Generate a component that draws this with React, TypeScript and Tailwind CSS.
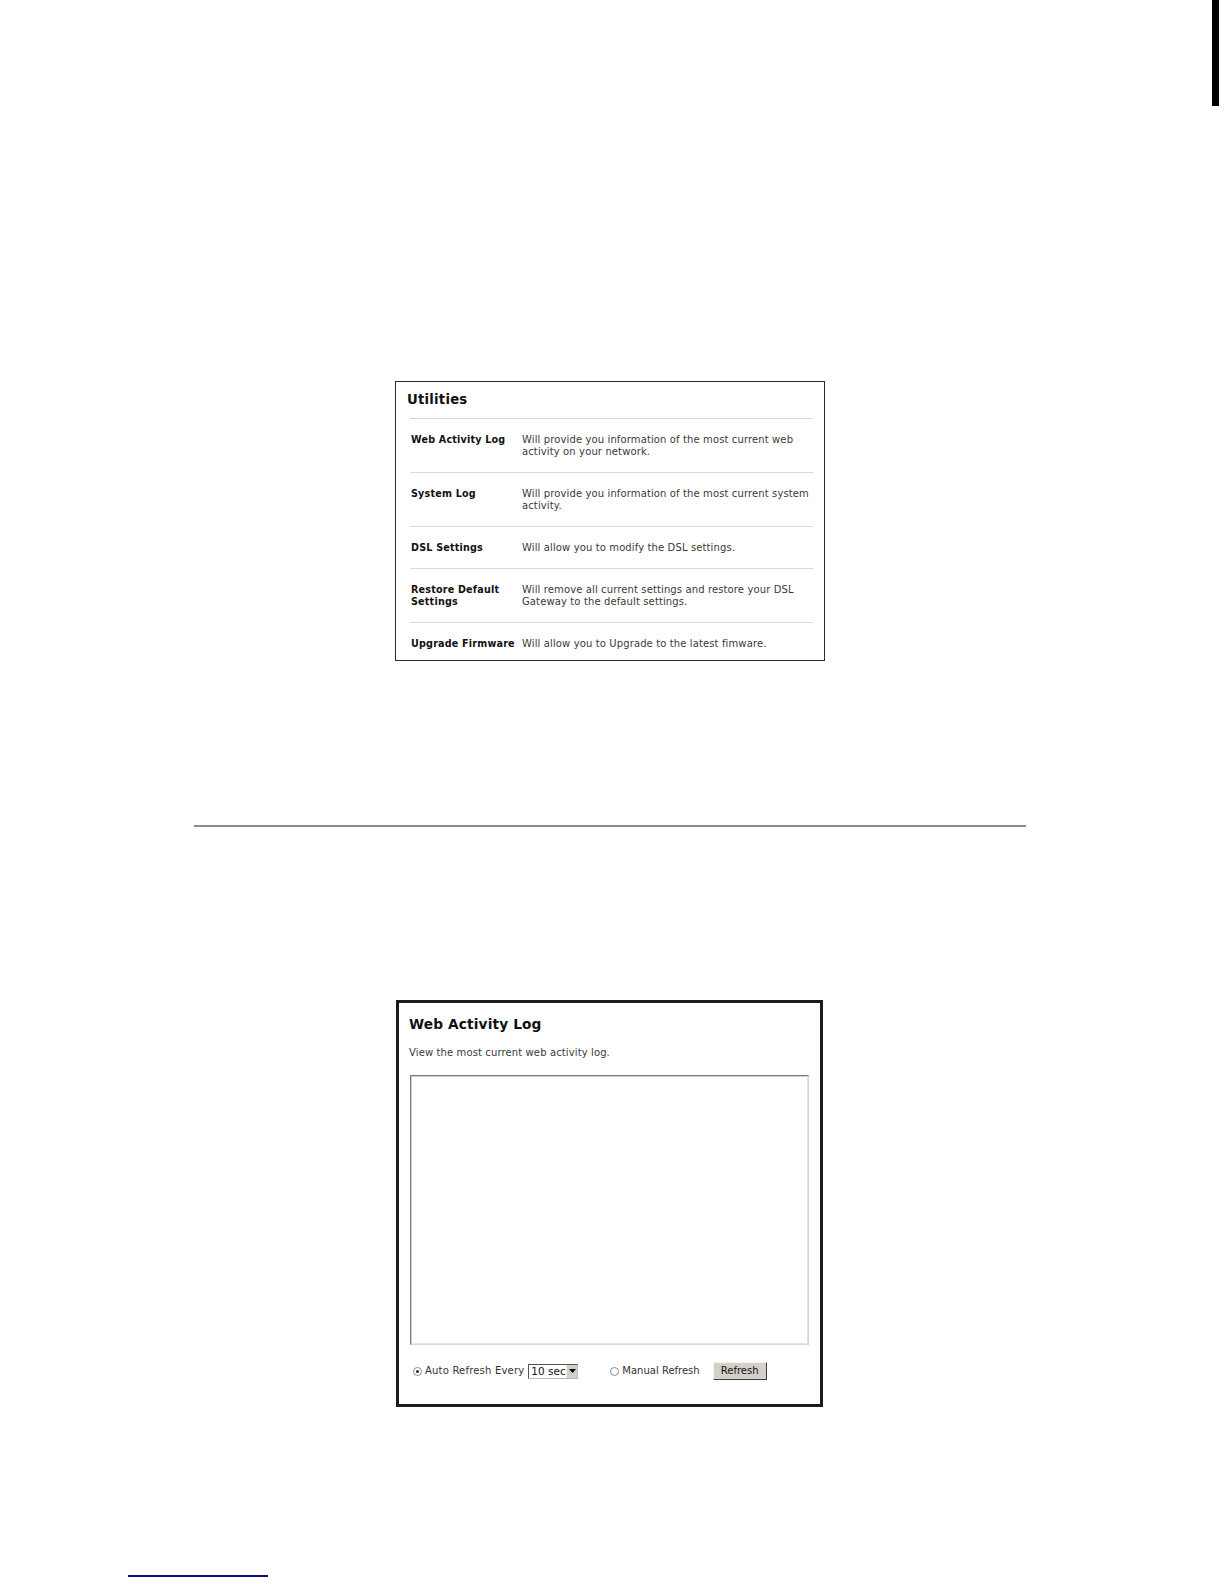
import React from "react";

const rows: { label: string[]; desc: string[] }[] = [
  {
    label: ["Web Activity Log"],
    desc: ["Will provide you information of the most current web", "activity on your network."],
  },
  {
    label: ["System Log"],
    desc: ["Will provide you information of the most current system", "activity."],
  },
  { label: ["DSL Settings"], desc: ["Will allow you to modify the DSL settings."] },
  {
    label: ["Restore Default", "Settings"],
    desc: ["Will remove all current settings and restore your DSL", "Gateway to the default settings."],
  },
  { label: ["Upgrade Firmware"], desc: ["Will allow you to Upgrade to the latest fimware."] },
];

function Radio({ checked }: { checked?: boolean }) {
  return (
    <span className="flex items-center justify-center w-[9px] h-[9px] rounded-full border border-[#8c8c8c] bg-white shrink-0">
      {checked ? <span className="w-[3px] h-[3px] rounded-full bg-[#222]" /> : null}
    </span>
  );
}

export default function App() {
  return (
    <div className="w-[1224px] h-[1584px] bg-white flex flex-col font-['DejaVu_Sans',sans-serif] text-black overflow-hidden">
      {/* margin tab */}
      <div className="ml-[1212px] w-[7px] h-[106px] bg-black shrink-0" />

      {/* Utilities panel */}
      <div className="mt-[275px] ml-[395px] w-[430px] h-[280px] border border-[#2a2a2a] box-border flex flex-col shrink-0">
        <div className="pl-[11px] pt-[10px] text-[13.3px] leading-[16px] font-bold text-[#111] tracking-[0.2px]">Utilities</div>
        <div className="mt-[10px] ml-[14px] mr-[11px] flex flex-col">
          {rows.map((r, i) => (
            <div
              key={i}
              className="flex border-t border-[#d9d9d9] pt-[15px] pb-[14px] text-[10px] leading-[12px]"
            >
              <div className="w-[112px] shrink-0 pl-px font-bold text-[9.6px] text-[#111] tracking-[0.2px]">
                {r.label.map((l, j) => (
                  <div key={j} className="whitespace-nowrap">{l}</div>
                ))}
              </div>
              <div className="text-[#3a3a3a] tracking-[0.12px]">
                {r.desc.map((d, j) => (
                  <div key={j} className="whitespace-nowrap">{d}</div>
                ))}
              </div>
            </div>
          ))}
        </div>
      </div>

      {/* horizontal rule */}
      <div className="mt-[164px] ml-[194px] w-[832px] h-[2px] bg-[#8a8a8a] shrink-0" />

      {/* Web Activity Log panel */}
      <div className="mt-[173px] ml-[396px] w-[427px] h-[407px] border-[3px] border-[#1c1c1c] box-border flex flex-col shrink-0">
        <div className="pl-[10px] pt-[13px] text-[13.7px] leading-[17px] font-bold text-[#111] tracking-[0.15px]">Web Activity Log</div>
        <div className="pl-[10px] mt-[14px] text-[10px] leading-[12px] text-[#3a3a3a] tracking-[0.12px]">
          View the most current web activity log.
        </div>
        <div className="ml-[11px] mt-[16px] w-[399px] h-[270px] border border-t-[#7a7a7a] border-l-[#7a7a7a] border-r-[#d6d6d6] border-b-[#d6d6d6] box-border">
          <div className="w-full h-full border border-t-[#cfcfcf] border-l-[#cfcfcf] border-r-[#e4e4e4] border-b-[#e4e4e4] box-border bg-white" />
        </div>
        <div className="ml-[14px] mt-[17px] h-[18px] flex items-center text-[10px] leading-[12px] text-[#333]">
          <Radio checked />
          <span className="ml-[3px] whitespace-nowrap tracking-[0.2px]">Auto Refresh Every</span>
          <div className="ml-[4px] w-[50px] h-[15px] flex border border-t-[#555] border-l-[#555] border-r-[#bbb] border-b-[#bbb] box-border bg-white">
            <span className="flex-1 pl-[2px] text-[10.5px] leading-[13px] text-[#111] whitespace-nowrap">10 sec</span>
            <span className="w-[11px] h-full flex items-center justify-center bg-[#d4d0c8] border-l border-[#eee]">
              <svg width="7" height="4" viewBox="0 0 7 4">
                <path d="M0 0 H7 L3.5 4 Z" fill="#000" />
              </svg>
            </span>
          </div>
          <span className="ml-[32px]">
            <Radio />
          </span>
          <span className="ml-[3px] whitespace-nowrap">Manual Refresh</span>
          <div className="ml-[13px] w-[54px] h-[18px] flex items-start justify-center bg-[#d4d0c8] border border-t-[#f4f4f4] border-l-[#f4f4f4] border-r-[#404040] border-b-[#404040] box-border">
            <span className="mt-[2px] text-[10px] leading-[12px] text-[#111]">Refresh</span>
          </div>
        </div>
      </div>

      {/* footer link underline */}
      <div className="mt-[168px] ml-[128px] w-[140px] h-[1.5px] bg-[#0d0d8a] shrink-0" />
    </div>
  );
}
